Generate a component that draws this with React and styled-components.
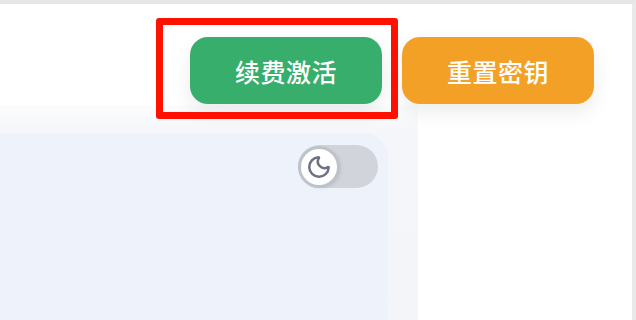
import React from 'react';
import styled, { createGlobalStyle } from 'styled-components';
import { Moon } from 'lucide-react';

const GlobalStyle = createGlobalStyle`
  html, body {
    margin: 0;
    padding: 0;
    background: #ffffff;
  }
  body {
    font-family: "Noto Sans CJK SC", "Noto Sans", sans-serif;
  }
`;

const App = () => {
  return (
    <Styled.Frame>
      <GlobalStyle />
      <Styled.Header>
        <Styled.Highlight>
          <Styled.Button $color="#37ae6b">续费激活</Styled.Button>
          <Styled.Marker />
        </Styled.Highlight>
        <Styled.Button $color="#f3a126">重置密钥</Styled.Button>
      </Styled.Header>
      <Styled.Panel>
        <Styled.Card>
          <Styled.Toggle>
            <Styled.Knob>
              <Moon size={26} strokeWidth={2.3} />
            </Styled.Knob>
          </Styled.Toggle>
        </Styled.Card>
      </Styled.Panel>
    </Styled.Frame>
  );
};

const Styled = {
  Frame: styled.div`
    width: 636px;
    height: 320px;
    box-sizing: border-box;
    border-top: 4px solid #e6e6e6;
    border-right: 4px solid #e9e9e9;
    overflow: hidden;
    display: flex;
    flex-direction: column;
  `,
  Header: styled.div`
    display: flex;
    justify-content: flex-end;
    align-items: center;
    gap: 20px;
    padding: 33px 38px 1px 0;
    position: relative;
    z-index: 1;
  `,
  Highlight: styled.div`
    position: relative;
    display: flex;
  `,
  Marker: styled.div`
    position: absolute;
    top: -19px;
    left: -34px;
    width: 242px;
    height: 101px;
    box-sizing: border-box;
    border: 7px solid #ff1100;
    border-radius: 3px;
    pointer-events: none;
  `,
  Button: styled.button`
    width: 192px;
    height: 67px;
    border: none;
    border-radius: 18px;
    background: ${(p) => p.$color};
    color: #ffffff;
    font-family: "Noto Sans CJK SC", sans-serif;
    font-size: 25px;
    font-weight: 500;
    letter-spacing: 0.5px;
    box-shadow: 0 8px 20px rgba(0, 0, 0, 0.08);
    cursor: pointer;
  `,
  Panel: styled.div`
    flex: 1;
    width: 418px;
    padding-top: 28px;
    padding-right: 30px;
    box-sizing: border-box;
    background: linear-gradient(180deg, #fbfcfd 0px, #f4f6f9 28px, #f3f5f9 100%);
  `,
  Card: styled.div`
    height: 100%;
    background: #eef3fb;
    border-top-right-radius: 24px;
    display: flex;
    justify-content: flex-end;
    align-items: flex-start;
    padding: 12px 10px 0 0;
    box-sizing: border-box;
  `,
  Toggle: styled.div`
    width: 80px;
    height: 43px;
    border-radius: 22px;
    background: #d1d5db;
    display: flex;
    align-items: center;
    padding: 0 3px;
    box-sizing: border-box;
  `,
  Knob: styled.div`
    width: 36px;
    height: 36px;
    border-radius: 50%;
    background: #ffffff;
    box-shadow: 0 0 0 3px #bfc3c9, 2px 1px 5px rgba(0, 0, 0, 0.22);
    display: flex;
    align-items: center;
    justify-content: center;
    color: #6b7280;
  `,
};

export default App;
